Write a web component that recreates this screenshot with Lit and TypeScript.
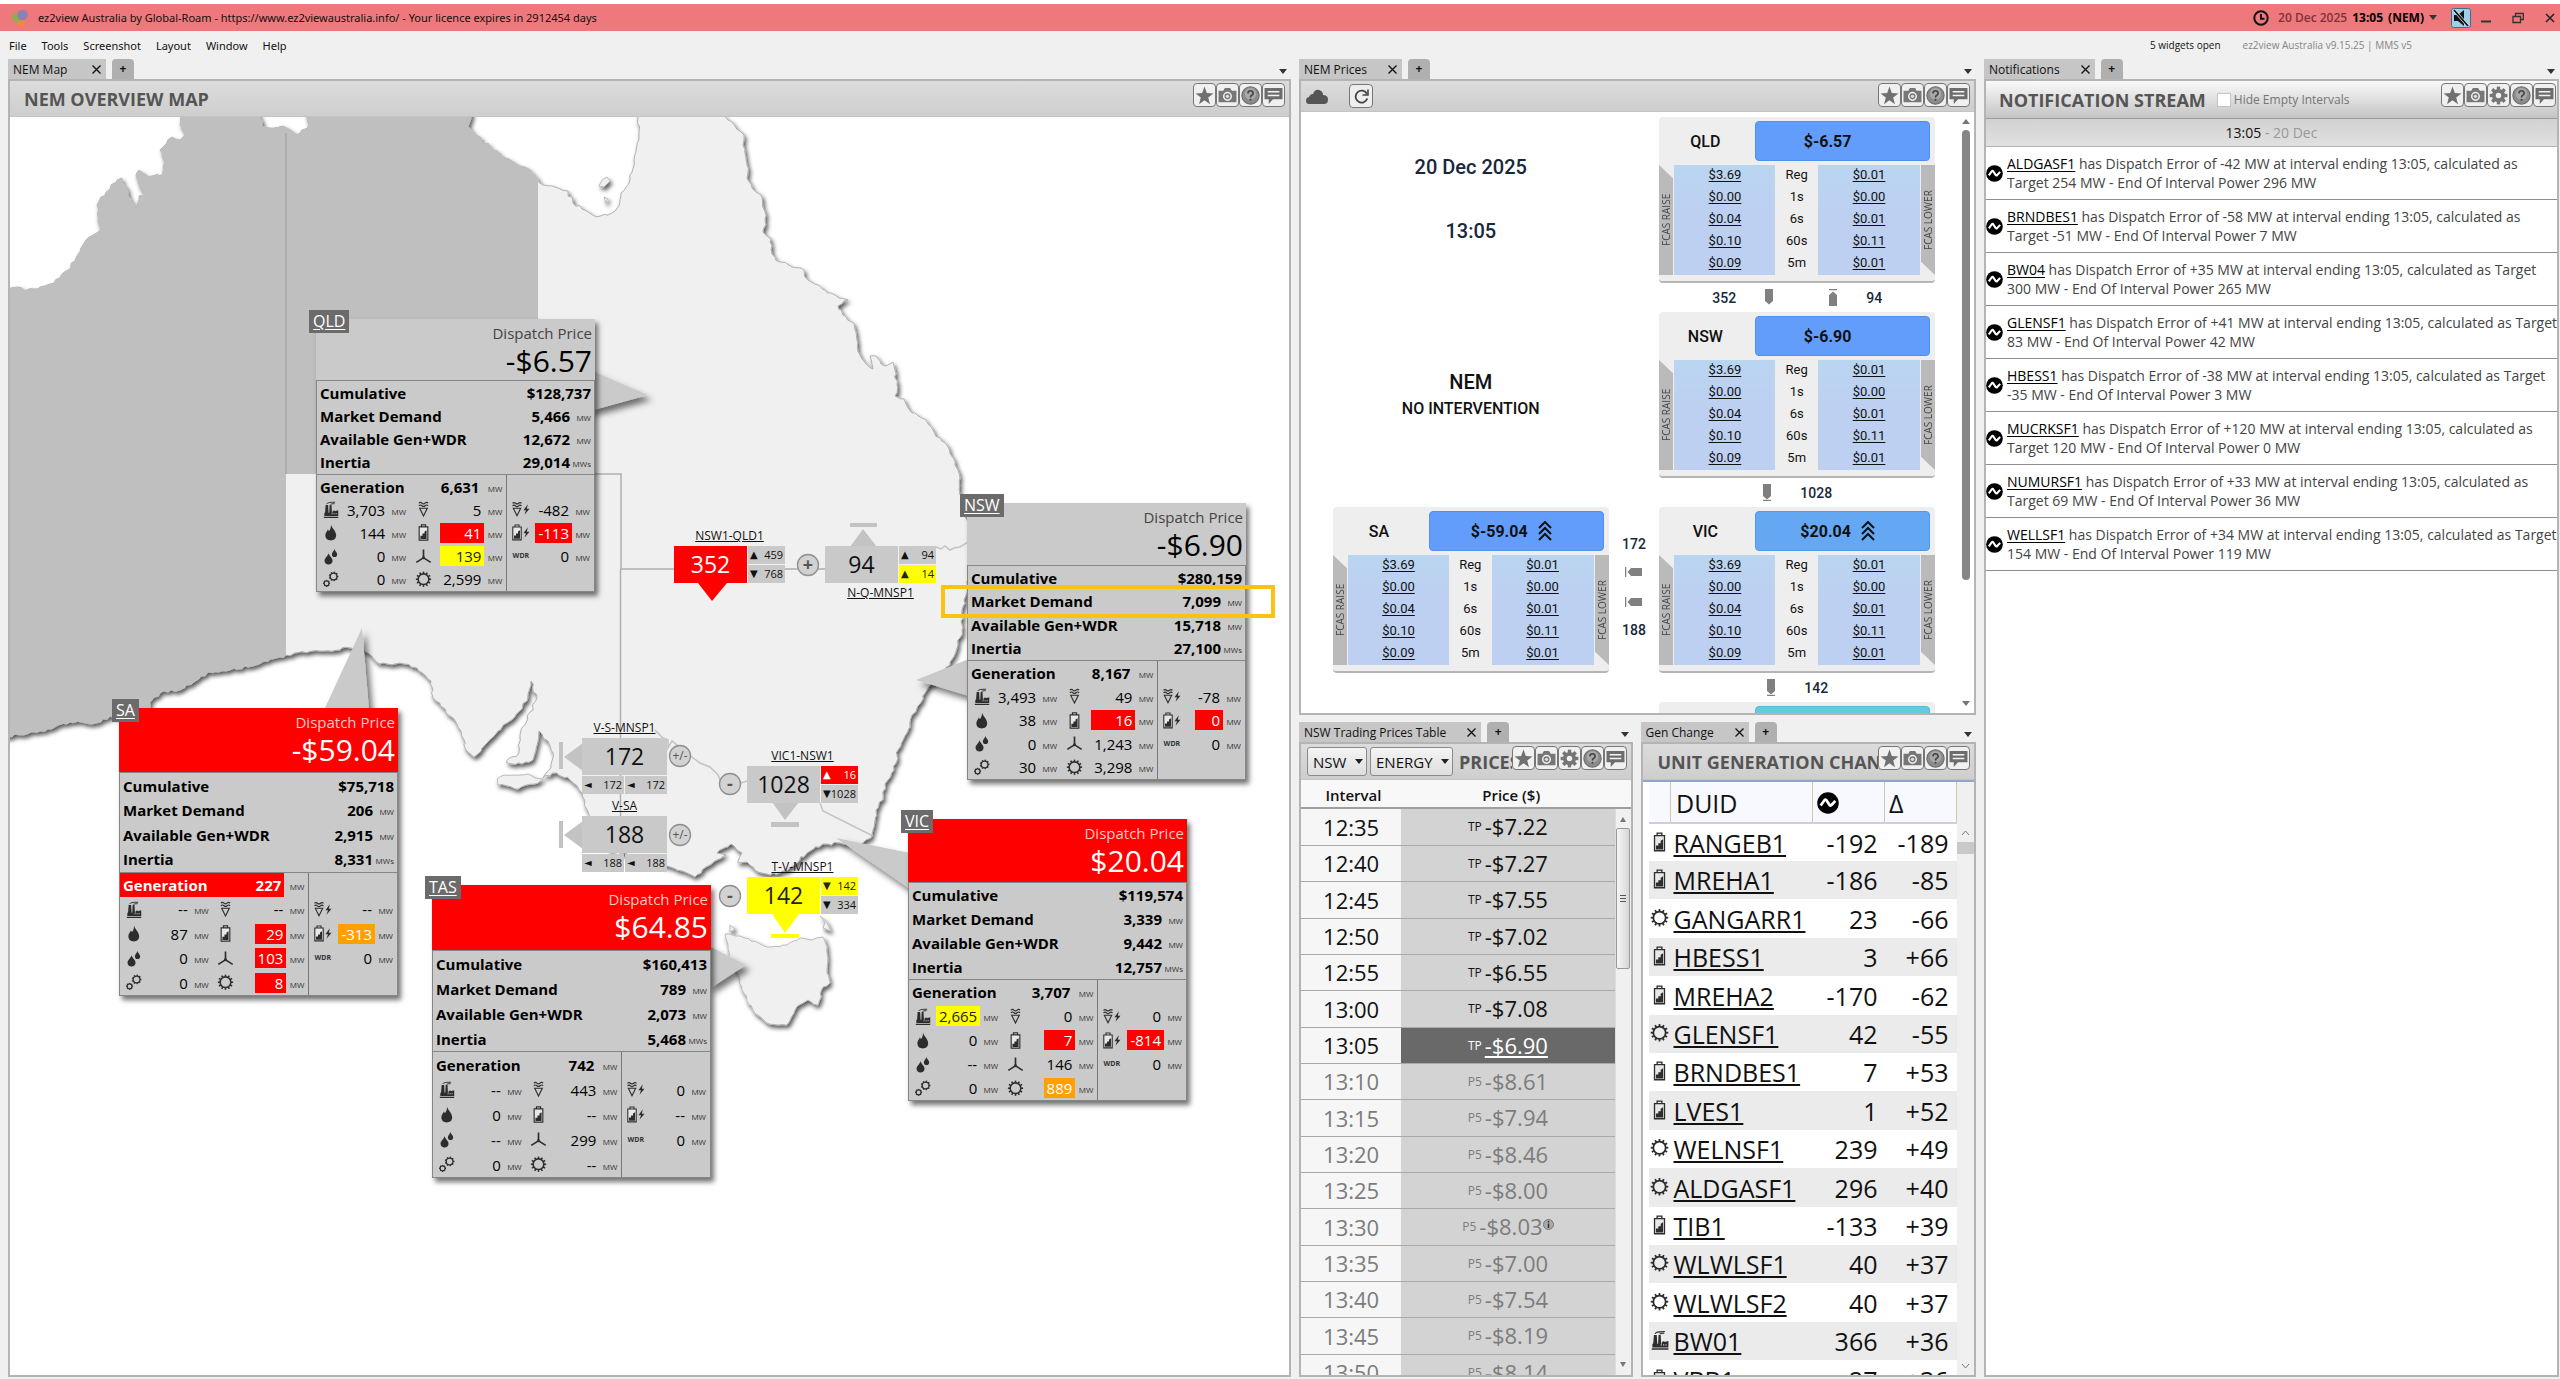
import { LitElement, html, svg, css, nothing } from "lit";
import { customElement, property } from "lit/decorators.js";
import { classMap } from "lit/directives/class-map.js";

type Pt = [number, number];

/* ---------- icons ---------- */

const ring = (cx: number, cy: number, r: number, w: number, teeth = 12) => svg`
  <circle cx=${cx} cy=${cy} r=${r} fill="none" stroke="#2d2d2d" stroke-width=${w}></circle>
  ${Array.from({ length: teeth }, (_, i) => {
    const a = (i * Math.PI * 2) / teeth;
    const c = Math.cos(a), s = Math.sin(a);
    return svg`<line x1=${cx + c * r} y1=${cy + s * r} x2=${cx + c * r * 1.42} y2=${cy + s * r * 1.42} stroke="#2d2d2d" stroke-width=${w}></line>`;
  })}`;

const glyphs: Record<string, unknown> = {
  coal: svg`<path fill="#2d2d2d" d="M2.600 12.500 L3.300 4 H5.700 L6.200 12.500 Z M6.800 12 L7.200 4 H9 L9.400 12 Z M2 11.500 H10 V10 L12 9 V10 L15.500 9 V14.500 H2 Z M1.500 15.200 H15.500 V16.400 H1.500 Z"></path><path d="M4.200 3 Q5 1 12.500 1.200 M8 3.300 Q9 2.500 12 2.600" fill="none" stroke="#2d2d2d" stroke-width=".9"></path><path d="M9 12.300 H15" stroke="#ccc" stroke-width="1" stroke-dasharray="1 1"></path>`,
  gas: svg`<path fill="#2d2d2d" d="M8.500 .5 C9 4 13.500 6.500 13.500 11 C13.500 14.500 11 16 8.300 16 C5.500 16 3 14.500 3 11 C3 8 5 7 5.500 5 L6.500 7 C8 5.500 8.500 3 8.500 .5 Z"></path>`,
  liquid: svg`<path fill="#2d2d2d" d="M6 5 C7 8 10 9.500 10 12.300 C10 14.600 8.200 16 6.100 16 C4 16 2.200 14.600 2.200 12.300 C2.200 9.500 5.500 8 6 5 Z M11.700 1 C12.300 3 14.500 4.200 14.500 6.200 C14.500 7.800 13.300 8.700 11.900 8.700 C10.500 8.700 9.300 7.800 9.300 6.200 C9.300 4.500 11.500 3 11.700 1 Z"></path>`,
  other: svg`${ring(4.200, 12, 2.400, 1.200, 8)}${ring(11, 5.300, 3.300, 1.300, 9)}`,
  hydro: svg`<path d="M3.500 2 Q5 .6 6.500 2 T9.500 2 T12.500 2 M3.500 4.600 Q5 3.200 6.500 4.600 T9.500 4.600 T12.500 4.600 M4.300 7 L8 14.500 L11.700 7 Z" fill="none" stroke="#2d2d2d" stroke-width="1.100"></path>`,
  battery: svg`<path d="M6 2.500 V.8 H10 V2.500 M3.800 2.800 H12.200 V15.600 H3.800 Z" fill="#e8e8e8" stroke="#2d2d2d" stroke-width="1.100"></path><path d="M5 14.600 V11.300 L7 11.300 V9.300 H9 V7.300 L11 6 V14.600 Z" fill="#2d2d2d"></path>`,
  wind: svg`<path d="M8 9 V1.500 M8.500 9.800 L15 14 M7.500 9.800 L1 14" stroke="#2d2d2d" stroke-width="1.600" fill="none"></path><circle cx="8" cy="9.500" r="1.400" fill="#2d2d2d"></circle>`,
  solar: ring(8, 8, 5.200, 1.500),
  bolt: svg`<path d="M12.800 3 L8.500 9 H11 L9.500 13.500 L14.500 7.500 H11.800 Z" fill="#2d2d2d"></path>`,
};
const glyph = (name: string) => html`<svg class="glyph" viewBox="0 0 16 16.500" aria-hidden="true">${glyphs[name]}</svg>`;

const tools: Record<string, unknown> = {
  Favourite: svg`<path fill="#707070" d="M9 .5 L11.200 6.600 L17.500 7 L12.500 10.800 L14.200 17.200 L9 13.500 L3.800 17.200 L5.500 10.800 L.5 7 L6.800 6.600 Z"></path>`,
  Snapshot: svg`<path fill="#777" d="M.5 4.500 H5 L6.500 2 H11.500 L13 4.500 H17.500 V15.500 H.5 Z"></path><circle cx="9" cy="9.800" r="3.600" fill="#777" stroke="#f2f2f2" stroke-width="1.400"></circle><circle cx="9" cy="9.800" r="1.600" fill="#ddd"></circle>`,
  Settings: svg`<circle cx="9" cy="9" r="4.400" fill="none" stroke="#757575" stroke-width="3.600"></circle>${Array.from({ length: 8 }, (_, i) => svg`<rect x="7.400" y=".6" width="3.200" height="3" fill="#757575" transform="rotate(${i * 45} 9 9)"></rect>`)}`,
  Help: svg`<circle cx="9" cy="9" r="8.200" fill="#8c8c8c" stroke="#6a6a6a" stroke-width="1"></circle><circle cx="9" cy="7.500" r="5.500" fill="#a8a8a8"></circle><path d="M6.500 7 Q6.700 4.500 9 4.500 T11.500 7 Q11.500 8.200 9.800 9 Q9 9.600 9 11" fill="none" stroke="#444" stroke-width="1.600"></path><circle cx="9" cy="13" r="1" fill="#444"></circle>`,
  Comment: svg`<path fill="#6d6d6d" d="M.5 2 H17.500 V12.500 H8.500 L4.500 17 V12.500 H.5 Z"></path><path d="M3.500 5.500 H14.500 M3.500 9 H14.500" stroke="#f4f4f4" stroke-width="1.400"></path>`,
};

const sineBadge = html`<svg class="sine" viewBox="0 0 18 18" aria-hidden="true"><circle cx="9" cy="9" r="8.800" fill="#000"></circle><path d="M3 11 L6.200 6.600 Q7 5.800 7.700 6.800 L10.300 10.700 Q11.100 11.600 11.900 10.600 L15 7.300" fill="none" stroke="#fff" stroke-width="2.200"></path></svg>`;

/* ---------- data ---------- */

type Cell = [string, string?];
interface Region {
  name: string; x: number; y: number; h: number; hot: boolean; price: string;
  rows: [string, string, string][];
  gen: Cell; a: Cell[]; b: Cell[]; c: Cell[];
}
const region = (name: string, x: number, y: number, h: number, hot: boolean, price: string, top: string[], gen: Cell, a: Cell[], b: Cell[], c: Cell[]): Region => ({
  name, x, y, h, hot, price, gen, a, b, c,
  rows: [["Cumulative", top[0], ""], ["Market Demand", top[1], "MW"], ["Available Gen+WDR", top[2], "MW"], ["Inertia", top[3], "MWs"]],
});
const regions: Region[] = [
  region("QLD", 316, 319, 273, false, "-$6.57", ["$128,737", "5,466", "12,672", "29,014"], ["6,631"],
    [["3,703"], ["144"], ["0"], ["0"]], [["5"], ["41", "red"], ["139", "yellow"], ["2,599"]], [["-482"], ["-113", "red"], ["0"]]),
  region("NSW", 967, 503, 277, false, "-$6.90", ["$280,159", "7,099", "15,718", "27,100"], ["8,167"],
    [["3,493"], ["38"], ["0"], ["30"]], [["49"], ["16", "red"], ["1,243"], ["3,298"]], [["-78"], ["0", "red"], ["0"]]),
  region("SA", 119, 708, 288, true, "-$59.04", ["$75,718", "206", "2,915", "8,331"], ["227", "red"],
    [["--"], ["87"], ["0"], ["0"]], [["--"], ["29", "red"], ["103", "red"], ["8", "red"]], [["--"], ["-313", "orange"], ["0"]]),
  region("TAS", 432, 885, 293, true, "$64.85", ["$160,413", "789", "2,073", "5,468"], ["742"],
    [["--"], ["0"], ["--"], ["0"]], [["443"], ["--"], ["299"], ["--"]], [["0"], ["--"], ["0"]]),
  region("VIC", 908, 819, 282, true, "$20.04", ["$119,574", "3,339", "9,442", "12,757"], ["3,707"],
    [["2,665", "yellow"], ["0"], ["--"], ["0"]], [["0"], ["7", "red"], ["146"], ["889", "orange"]], [["0"], ["-814", "red"], ["0"]]),
];

interface Link { id: string; x: number; y: number; value: string; tone: string; side: boolean; below?: boolean; limits: [string, string, string?][] }
const links: Link[] = [
  { id: "NSW1-QLD1", x: 674, y: 546, value: "352", tone: "red", side: true, limits: [["▲", "459"], ["▼", "768"]] },
  { id: "N-Q-MNSP1", x: 825, y: 546, value: "94", tone: "", side: true, below: true, limits: [["▲", "94"], ["▲", "14", "yellow"]] },
  { id: "VIC1-NSW1", x: 747, y: 766, value: "1028", tone: "", side: true, limits: [["▲", "16", "red"], ["▼", "1028"]] },
  { id: "T-V-MNSP1", x: 747, y: 877, value: "142", tone: "yellow", side: true, limits: [["▼", "142", "yellow"], ["▼", "334"]] },
  { id: "V-S-MNSP1", x: 582, y: 738, value: "172", tone: "", side: false, limits: [["◄", "172"], ["◄", "172"]] },
  { id: "V-SA", x: 582, y: 816, value: "188", tone: "", side: false, limits: [["◄", "188"], ["◄", "188"]] },
];

const intervals: [string, string, string][] = [
  ["12:35", "TP", "-$7.22"], ["12:40", "TP", "-$7.27"], ["12:45", "TP", "-$7.55"], ["12:50", "TP", "-$7.02"],
  ["12:55", "TP", "-$6.55"], ["13:00", "TP", "-$7.08"], ["13:05", "TP", "-$6.90"], ["13:10", "P5", "-$8.61"],
  ["13:15", "P5", "-$7.94"], ["13:20", "P5", "-$8.46"], ["13:25", "P5", "-$8.00"], ["13:30", "P5", "-$8.03"],
  ["13:35", "P5", "-$7.00"], ["13:40", "P5", "-$7.54"], ["13:45", "P5", "-$8.19"], ["13:50", "P5", "-$8.14"],
];

const units: [string, string, string, string][] = [
  ["battery", "RANGEB1", "-192", "-189"], ["battery", "MREHA1", "-186", "-85"], ["solar", "GANGARR1", "23", "-66"],
  ["battery", "HBESS1", "3", "+66"], ["battery", "MREHA2", "-170", "-62"], ["solar", "GLENSF1", "42", "-55"],
  ["battery", "BRNDBES1", "7", "+53"], ["battery", "LVES1", "1", "+52"], ["solar", "WELNSF1", "239", "+49"],
  ["solar", "ALDGASF1", "296", "+40"], ["battery", "TIB1", "-133", "+39"], ["solar", "WLWLSF1", "40", "+37"],
  ["solar", "WLWLSF2", "40", "+37"], ["coal", "BW01", "366", "+36"], ["battery", "VBB1", "27", "+36"],
];

const notices: [string, string, string, string][] = [
  ["ALDGASF1", "-42", "254", "296"], ["BRNDBES1", "-58", "-51", "7"], ["BW04", "+35", "300", "265"], ["GLENSF1", "+41", "83", "42"],
  ["HBESS1", "-38", "-35", "3"], ["MUCRKSF1", "+120", "120", "0"], ["NUMURSF1", "+33", "69", "36"], ["WELLSF1", "+34", "154", "119"],
];

/* ---------- map geometry ---------- */

const mainland: Pt[] = [
  [0, 288], [18, 287], [25, 291], [45, 286], [60, 278], [75, 261], [83, 245], [86, 240], [100, 231], [98, 222], [97, 205], [101, 197],
  [110, 189], [117, 180], [122, 178], [128, 193], [136, 209], [139, 196], [146, 195], [136, 176], [139, 170], [146, 175], [160, 176],
  [165, 162], [160, 150], [172, 137], [180, 140], [186, 135], [180, 125], [181, 110], [258, 110], [264, 127], [270, 128], [285, 127],
  [296, 135], [302, 130], [309, 125], [305, 110], [472, 110], [468, 127], [475, 135], [490, 147], [505, 158], [515, 163], [530, 170],
  [538, 179], [543, 185], [568, 191], [573, 203], [582, 209], [597, 217], [612, 213], [618, 207], [621, 193], [630, 180], [634, 160],
  [639, 135], [637, 110], [718, 110], [728, 120], [740, 131], [744, 135], [743, 145], [747, 165], [747, 178], [756, 192], [761, 195],
  [766, 215], [763, 232], [771, 239], [772, 254], [780, 262], [792, 267], [801, 268], [808, 280], [825, 290], [835, 295], [848, 300],
  [838, 306], [843, 315], [852, 322], [857, 340], [860, 355], [866, 364], [873, 369], [870, 356], [876, 356], [885, 366], [893, 362],
  [895, 370], [897, 385], [895, 396], [904, 399], [912, 413], [925, 419], [934, 432], [948, 447], [955, 462], [960, 478], [960, 495],
  [970, 530], [970, 575], [964, 600], [962, 630], [957, 648], [950, 665], [940, 678], [928, 688], [920, 704], [912, 715], [907, 733], [898, 750],
  [894, 770], [885, 784], [883, 800], [876, 810], [873, 830], [871, 838], [860, 844], [840, 843], [823, 844], [807, 853], [793, 866],
  [780, 873], [770, 875], [758, 872], [747, 862], [738, 863], [742, 853], [737, 850], [731, 844], [717, 853], [726, 855], [717, 860],
  [706, 867], [695, 877], [687, 873], [667, 866], [640, 856], [612, 853], [592, 830], [588, 812], [582, 793], [570, 780], [557, 773],
  [543, 778], [551, 768], [553, 753], [548, 741], [539, 731], [533, 760], [522, 764], [506, 762], [519, 753], [521, 731], [530, 712],
  [537, 698], [531, 681], [527, 701], [514, 718], [498, 731], [485, 745], [478, 754], [474, 757], [466, 750], [461, 731],
  [445, 709], [433, 698], [431, 681], [417, 668], [400, 663], [380, 664], [368, 653], [351, 648], [319, 651], [286, 655], [253, 666],
  [230, 670], [208, 672], [194, 682], [180, 690], [160, 693], [152, 700], [149, 710], [130, 720], [110, 716], [96, 723], [70, 722], [40, 731], [0, 738],
];
const tasmania: Pt[] = [
  [725, 934], [740, 936], [767, 947], [787, 945], [800, 938], [812, 940], [823, 937], [827, 947], [827, 973], [830, 983], [823, 987],
  [818, 1005], [808, 1000], [803, 1003], [795, 1010], [787, 1025], [767, 1023], [753, 1010], [742, 990], [738, 975], [730, 960],
];
const kangaroo: Pt[] = [[497, 779], [505, 775], [520, 775], [528, 774], [535, 778], [543, 779], [534, 784], [526, 785], [518, 789], [508, 786], [498, 785]];

/** Breaks long straight runs into short uneven steps, so a coast reads as natural. */
function coast(points: Pt[], amount = 1.5): string {
  let seed = 7;
  const rnd = () => { seed = (seed * 16807) % 2147483647; return seed / 2147483647 - 0.5; };
  const out: string[] = [];
  points.forEach((p, i) => {
    const q = points[(i + 1) % points.length];
    const len = Math.hypot(q[0] - p[0], q[1] - p[1]);
    const n = Math.max(1, Math.round(len / 4));
    for (let k = 0; k < n; k++) {
      const t = k / n;
      const j = k === 0 ? 0 : amount * 2;
      out.push(`${(p[0] + (q[0] - p[0]) * t + rnd() * j).toFixed(1)} ${(p[1] + (q[1] - p[1]) * t + rnd() * j).toFixed(1)}`);
    }
  });
  return `M${out.join("L")}Z`;
}
const mainlandPath = coast(mainland);

const ORIGIN: Pt = [10, 117];
const at = (x: number, y: number) => `left:${x - ORIGIN[0]}px;top:${y - ORIGIN[1]}px`;

const base = css`
  * { box-sizing: border-box; }
  a { color: inherit; text-decoration: underline; text-underline-offset: 2px; }
  button { font: inherit; color: inherit; padding: 0; border: 0; background: none; }
  h2, h3, p, ul, dl, dd { margin: 0; padding: 0; }
  .glyph { width: 17px; height: 17px; display: block; }
  .red { background: #f00; color: #fff; }
  .yellow { background: #ff0; color: #222; }
  .orange { background: #ffa000; color: #fff; }
`;

/* ---------- region call-out on the map ---------- */

@customElement("region-card")
class RegionCard extends LitElement {
  @property({ attribute: false }) data!: Region;

  static styles = [base, css`
    :host { display: block; width: 279px; color: #000; font-size: 15px; line-height: 20px; }
    .card { position: relative; height: 100%; display: grid; grid-template-rows: 61fr 94fr 118fr; background: #cacaca; box-shadow: 3px 4px 5px rgba(0, 0, 0, .55); }
    .name { position: absolute; left: -7px; top: -9px; height: 23px; padding: 0 4px; background: #6b6b6b; color: #fff; font-size: 16px; line-height: 22px; }
    .head { padding: 4px 3px 0 0; text-align: right; color: #444; line-height: 20px; }
    .price { font-size: 30px; line-height: 36px; color: #000; }
    .hot .head { background: #f00; color: #ffc9c9; }
    .hot .price { color: #fff; }
    .totals { display: grid; grid-template-rows: repeat(4, 1fr); border: 1px solid #868686; border-bottom: 0; font-weight: 700; }
    .total { display: flex; align-items: center; padding: 0 3px; }
    .total dt { flex: 1; }
    .unit { width: 21px; font-size: 8px; font-weight: 400; color: #333; text-align: right; line-height: 10px; padding-top: 4px; }
    .fuel { display: grid; grid-template-columns: 190fr 88fr; border: 1px solid #868686; min-height: 0; }
    .made { display: grid; grid-template-rows: 1fr 4fr; border-right: 1px solid #777; min-height: 0; }
    .stored { display: grid; grid-template-rows: 1fr 4fr; padding-right: 4px; }
    .gen { display: flex; align-items: center; font-weight: 700; padding-right: 4px; }
    .gen-fill { display: flex; flex: 1; align-self: stretch; align-items: center; justify-content: space-between; padding: 0 3px; }
    .gen .unit { width: 20px; }
    .pair { display: grid; grid-template-columns: 91fr 98fr; padding-right: 4px; }
    .group { display: grid; grid-template-columns: 27px 1fr auto 18px; grid-template-rows: repeat(4, 1fr); align-items: center; font-size: 15px; }
    .group + .group { grid-template-columns: 34px 1fr auto 18px; }
    .ic { display: flex; justify-content: center; }
    .value { grid-column: 3; text-align: right; padding: 0 3px; }
    .group .unit { width: 18px; }
    .wdr { font-size: 7px; font-weight: 700; color: #333; line-height: 10px; }
    .small { width: 12px; }
    .small + .small { width: 10px; margin-left: -2px; }
  `];

  private group(cells: Cell[], icons: string[]) {
    return html`<div class="group">${cells.map((c, i) => html`
      <span class="ic">${icons[i] === "WDR" ? html`<span class="wdr">WDR</span>` : icons[i].split("+").map((n, _, all) => html`<svg class="glyph ${all.length > 1 ? "small" : ""}" viewBox=${n === "bolt" ? "6 0 10 16.5" : all.length > 1 ? "2 0 12 16.5" : "0 0 16 16.5"} aria-hidden="true">${glyphs[n]}</svg>`)}</span>
      <span class="value ${c[1] ?? ""}">${c[0]}</span><span class="unit">MW</span>`)}</div>`;
  }

  render() {
    const d = this.data;
    return html`<section class=${classMap({ card: true, hot: d.hot })}>
      <a class="name" href="#${d.name}">${d.name}</a>
      <div class="head"><div>Dispatch Price</div><div class="price">${d.price}</div></div>
      <dl class="totals">${d.rows.map(r => html`<div class="total"><dt>${r[0]}</dt><dd>${r[1]}</dd>${r[2] ? html`<dd class="unit">${r[2]}</dd>` : nothing}</div>`)}</dl>
      <div class="fuel">
        <div class="made">
          <div class="gen"><div class="gen-fill ${d.gen[1] ?? ""}"><span>Generation</span><span>${d.gen[0]}</span></div><span class="unit">MW</span></div>
          <div class="pair">${this.group(d.a, ["coal", "gas", "liquid", "other"])}${this.group(d.b, ["hydro", "battery", "wind", "solar"])}</div>
        </div>
        <div class="stored"><span></span>${this.group(d.c, ["hydro+bolt", "battery+bolt", "WDR"])}</div>
      </div>
    </section>`;
  }
}

/* ---------- region tile in the price panel ---------- */

@customElement("price-tile")
class PriceTile extends LitElement {
  @property() name = "";
  @property() price = "";
  @property() tone = "";
  @property({ type: Boolean }) rising = false;

  static styles = [base, css`
    :host { display: block; font-family: Roboto, "Liberation Sans", sans-serif; font-weight: 400; color: #111; }
    .tile { background: #eee; border-radius: 4px; border-bottom: 2px solid #b5b5b5; height: 166px; padding-top: 4px; }
    .top { display: grid; grid-template-columns: 96fr 175fr 5fr; height: 40px; align-items: stretch; }
    .name { display: flex; align-items: center; justify-content: center; font-size: 16px; font-weight: 500; margin: 0; padding-right: 4px; }
    .price { display: flex; align-items: center; justify-content: center; gap: 10px; font-size: 16px; font-weight: 700; background: #639dfb; border: 1px solid #4f8ff0; border-radius: 4px; padding-right: 30px; }
    .rising { padding-right: 10px; }
    .price.mid { background: #64a8f4; border-color: #4f9aec; }
    .price.teal { background: #66cbe0; border-color: #4fbdd4; }
    .price svg { width: 14px; height: 20px; }
    .body { display: grid; grid-template-columns: 14px 102fr 41fr 103fr 14px; column-gap: 1px; margin-top: 4px; height: 110px; }
    .bar { writing-mode: vertical-rl; transform: rotate(180deg); background: #bababa; color: #444; font: 10px/14px "Open Sans", sans-serif; display: flex; align-items: center; justify-content: center; }
    .raise { clip-path: polygon(0 0, 100% 0, 100% 100%, 0 88%); }
    .lower { clip-path: polygon(0 0, 100% 12%, 100% 100%, 0 100%); }
    .col { display: grid; grid-template-rows: repeat(5, 22px); font-size: 13px; line-height: 20px; text-align: center; }
    .tint { background: linear-gradient(#b9d5f0, #bdd0f2 40%); }
  `];

  render() {
    return html`<section class="tile">
      <div class="top"><h3 class="name">${this.name}</h3><div class="price ${this.tone} ${this.rising ? "rising" : ""}">${this.price}
        ${this.rising ? html`<svg viewBox="0 0 14 20" aria-hidden="true"><path d="M1 7 L7 1 L13 7 M1 13 L7 7 L13 13 M1 19 L7 13 L13 19" fill="none" stroke="#111" stroke-width="2"></path></svg>` : nothing}</div></div>
      ${this.price ? html`<div class="body">
        <div class="bar raise">FCAS RAISE</div>
        <div class="col tint">${["$3.69", "$0.00", "$0.04", "$0.10", "$0.09"].map(v => html`<a href="#raise">${v}</a>`)}</div>
        <div class="col">${["Reg", "1s", "6s", "60s", "5m"].map(v => html`<span>${v}</span>`)}</div>
        <div class="col tint">${["$0.01", "$0.00", "$0.01", "$0.11", "$0.01"].map(v => html`<a href="#lower">${v}</a>`)}</div>
        <div class="bar lower">FCAS LOWER</div>
      </div>` : nothing}
    </section>`;
  }
}

/* ---------- application ---------- */

@customElement("app-root")
class AppRoot extends LitElement {
  static styles = [base, css`
    :host { display: flex; flex-direction: column; height: 100vh; overflow: hidden; background: #f0f0f0; color: #111; font-family: "Open Sans", "Noto Sans", sans-serif; font-size: 12px; }
    .titlebar { display: flex; align-items: center; height: 31px; border-top: 4px solid #fff; background: #ef787c; padding: 0 0 0 11px; flex: none; }
    .logo { width: 18px; height: 18px; margin-right: 9px; }
    .grow { flex: 1; }
    .caption { flex: 1; font-family: "Noto Sans", "Open Sans", sans-serif; font-size: 11px; }
    .when { display: flex; align-items: center; gap: 5px; font-weight: 700; color: #000; }
    .when .date { color: #7c3338; font-weight: 600; }
    .when svg { width: 16px; height: 16px; margin-right: 4px; }
    .caret { width: 0; height: 0; border: 4px solid transparent; border-top: 5px solid #333; border-bottom: 0; }
    .mute { width: 20px; height: 20px; margin: 0 5px 0 14px; }
    .wins { display: flex; gap: 12px; }
    .win { width: 20px; height: 24px; display: flex; align-items: center; justify-content: center; }
    .win svg { width: 12px; height: 12px; }
    .menubar { display: flex; align-items: center; height: 28px; padding-left: 9px; flex: none; }
    .menubar nav { display: flex; gap: 15px; flex: 1; font-family: "Noto Sans", "Open Sans", sans-serif; font-size: 11px; }
    .status { display: flex; gap: 22px; font-size: 10px; padding-right: 148px; }
    .muted { color: #858585; }
    .desk { flex: 1; min-height: 0; display: grid; grid-template-columns: 1283fr 677fr 575fr; gap: 8px; padding: 0 1px 2px 8px; }
    .middle { display: grid; grid-template-rows: 656fr 655fr; gap: 7px; min-height: 0; min-width: 0; }
    .pairs { display: grid; grid-template-columns: 334fr 336fr; gap: 8px; min-height: 0; }
    .dock { display: flex; flex-direction: column; min-height: 0; min-width: 0; }
    .tabs { display: flex; height: 20px; flex: none; align-items: stretch; }
    .tab { display: flex; align-items: center; justify-content: space-between; gap: 21px; min-width: 98px; padding: 0 5px; background: #c6c6c6; white-space: nowrap; }
    .tab svg { width: 9px; height: 9px; display: block; }
    .add { width: 22px; margin-left: 6px; background: #b0b0b0; border-radius: 4px 4px 0 0; display: flex; align-items: center; justify-content: center; font-weight: 700; line-height: 16px; }
    .tabs .caret { margin: 10px 4px 0 auto; }
    .panel { flex: 1; min-height: 0; display: flex; flex-direction: column; border: 2px solid #b4b4b4; background: #fff; overflow: hidden; }
    .head { position: relative; display: flex; align-items: center; height: 36px; flex: none; background: linear-gradient(#dcdcdc, #cecece); border-bottom: 1px solid #c4c4c4; }
    .map-head { padding-left: 14px; }
    .map-head h2, .unit-head h2 { flex: 1; }
    .unit-head { padding-left: 15px; }
    .head h2 { font-size: 18px; font-weight: 700; color: #555; white-space: nowrap; overflow: hidden; min-width: 0; line-height: 26px; }
    .tools { display: flex; align-self: flex-start; padding: 2px 4px 0 0; margin-left: auto; flex: none; }
    .tool { width: 23px; height: 24px; border: 1px solid #777; border-radius: 4px; background: #f0f0f0; display: flex; align-items: center; justify-content: center; }
    .tool svg { width: 19px; height: 19px; flex: none; }

    .canvas { position: relative; flex: 1; overflow: hidden; background: #fff; min-height: 0; }
    .land { position: absolute; left: 0; top: 0; width: 1281px; height: 1260px; }
    .spot { position: absolute; }
    .mark { position: absolute; width: 334px; height: 33px; border: 4px solid #fcc212; }
    .link { position: absolute; color: #111; }
    .link .id { position: absolute; left: 0; right: 0; top: -18px; text-align: center; line-height: 16px; white-space: nowrap; text-underline-offset: 1px; }
    .link .id.below { top: 39px; }
    .flow { display: grid; gap: 1px; }
    .across { grid-template-columns: 73px 37px; }
    .down { grid-template-rows: 37px 18px; width: 85px; }
    .amount { display: flex; align-items: center; justify-content: center; background: #c9c9c9; font-size: 23px; line-height: 37px; }
    .limits { display: grid; gap: 1px; line-height: 18px; }
    .down .limits { grid-template-columns: 1fr 1fr; }
    .limit { display: flex; justify-content: space-between; padding: 0 2px; background: #c9c9c9; line-height: 18px; font-size: 11px; }
    .limit i { font: 10px/18px "DejaVu Sans", sans-serif; }
    .amount.red, .limit.red { background: #f00; color: #fff; }
    .amount.yellow, .limit.yellow { background: #ff0; }

    .cloud { width: 24px; height: 18px; margin: 0 20px 0 4px; }
    .slim { height: 31px; }
    .refresh { width: 24px; height: 24px; border: 1px solid #777; border-radius: 4px; background: #eee; display: flex; align-items: center; justify-content: center; }
    .refresh svg { width: 17px; height: 17px; }
    .scroller { flex: 1; min-height: 0; display: flex; overflow: hidden; }
    .prices { flex: 1; min-width: 0; align-self: flex-start; display: grid; grid-template-columns: 276fr 51fr 276fr; grid-template-rows: repeat(3, 166px 29px) 166px; padding: 5px 22px 0 32px; font-family: Roboto, "Liberation Sans", sans-serif; font-weight: 500; color: #182739; }
    .stamp { grid-area: 1 / 1 / 5 / 2; text-align: center; font-size: 20px; line-height: 24px; padding-top: 38px; }
    .stamp p + p { margin-top: 40px; }
    .stamp .nem { margin-top: 127px; color: #111; }
    .stamp p + .calm { margin-top: 3px; font-size: 16px; color: #111; }
    .stamp p + .nem { margin-top: 127px; }
    .q { grid-area: 1 / 3; } .n { grid-area: 3 / 3; } .v { grid-area: 5 / 3; } .s { grid-area: 5 / 1; } .t { grid-area: 7 / 3; }
    .between { grid-column: 3; display: flex; align-items: center; justify-content: center; gap: 28px; font-size: 14px; }
    .between svg { width: 10px; height: 17px; }
    .two svg + svg { margin-left: 26px; }
    .side { grid-area: 5 / 2; display: flex; flex-direction: column; align-items: center; gap: 14px; padding-top: 28px; font-size: 14px; line-height: 18px; }
    .side svg { width: 17px; height: 10px; }
    .side svg + svg { margin-top: 6px; }
    .track { width: 17px; flex: none; display: flex; flex-direction: column; align-items: center; padding: 7px 0; }
    .up { border: 4px solid transparent; border-bottom: 5px solid #777; border-top: 0; }
    .dn { border: 4px solid transparent; border-top: 5px solid #777; border-bottom: 0; margin-top: auto; }
    .thumb { width: 8px; height: 450px; margin-top: 6px; border-radius: 4px; background: #868686; }

    .pick { position: relative; display: block; margin-left: 3px; }
    .pick::after { content: ""; position: absolute; right: 4px; top: 12px; border: 4px solid transparent; border-top: 5px solid #222; border-bottom: 0; pointer-events: none; }
    .pick select { appearance: none; height: 29px; width: 60px; font: 15px "Open Sans", sans-serif; color: #111; padding: 0 0 0 5px; background: linear-gradient(#f4f4f4, #dedede); border: 1px solid #8a8a8a; border-radius: 3px; }
    .pick .wide { width: 83px; }
    .picks { display: flex; padding-left: 3px; margin-right: 6px; flex: none; }
    table { border-collapse: collapse; width: 100%; table-layout: fixed; }
    .trade { flex: 1; min-width: 0; }
    .heading { height: 29px; font-size: 15px; line-height: 20px; background: #f8f8f8; border-bottom: 2px solid #9f9f9f; display: grid; grid-template-columns: 105fr 211fr 14fr; align-items: center; text-align: center; font-weight: 600; flex: none; padding-top: 2px; }
    .trade tr { height: 36px; }
    .trade tr:nth-child(3n) { height: 37px; }
    .trade th, .trade td { padding: 0; text-align: center; font-size: 22px; font-weight: 400; line-height: 30px; border-bottom: 1px solid #a9a9a9; }
    .trade th { width: 32%; background: #f6f6f6; }
    .trade td { background: #d3d3d3; }
    .trade small { font-size: 12px; margin-right: 3px; vertical-align: 4px; }
    .later { color: #7c7c7c; }
    .trade .now td { background: #696969; color: #fff; }
    .info { width: 11px; height: 11px; vertical-align: 5px; }
    .rail { width: 16px; flex: none; background: #f0f0f0; border-left: 1px solid #ddd; display: flex; flex-direction: column; align-items: center; padding: 8px 0; }
    .rail .up, .rail .dn { border-left-width: 3px; border-right-width: 3px; }
    .grip { width: 14px; height: 141px; margin-top: 6px; border: 1px solid #999; border-radius: 2px; background: linear-gradient(90deg, #f6f6f6, #d6d6d6); display: flex; align-items: center; justify-content: center; }
    .grip::after { content: ""; width: 6px; height: 7px; background: repeating-linear-gradient(#555 0 1px, transparent 1px 3px); }
    .units { flex: 1; min-width: 0; padding-left: 6px; }
    .units th, .units td { padding: 0; font-size: 25px; line-height: 36px; font-weight: 400; }
    .units thead th { height: 41px; padding-top: 2px; text-align: left; background: #f7f9fe; border-right: 1px solid #cfc9b0; border-bottom: 2px solid #cdcde0; }
    .units tbody tr { height: 38px; }
    .units tbody tr:nth-child(5n + 3), .units tbody tr:nth-child(5n) { height: 39px; }
    .units tbody tr:nth-child(even) { background: #ebebeb; }
    .units .pic { width: 22px; }
    .units .glyph { width: 19px; height: 22px; margin: 0 0 2px 1px; }
    .units .duid { width: 142px; text-align: left; padding-left: 3px; }
    .units thead .duid { padding-left: 5px; }
    .units .out { width: 72px; text-align: right; padding-right: 7px; }
    .units .diff { text-align: right; padding-right: 8px; }
    .units thead .out, .units thead .diff { text-align: left; padding-left: 4px; }
    .units .sine { width: 22px; height: 22px; }
    .bluebox { border-top: 2px solid #93a5c6; }
    .thin { width: 17px; flex: none; background: #f0f0f0; display: flex; flex-direction: column; align-items: center; padding: 48px 0 6px; }
    .thin svg { width: 9px; height: 6px; display: block; }
    .thin svg:last-child { margin-top: auto; }
    .nub { width: 17px; height: 12px; margin-top: 6px; background: #c9c9c9; }
    .sine { width: 17px; height: 17px; display: block; flex: none; }

    .glossy { height: 38px; padding-left: 13px; background: linear-gradient(#fafafa, #c4c4c4); border-bottom: 1px solid #9a9a9a; }
    .glossy .tools { padding-right: 1px; }
    .check { display: flex; align-items: center; gap: 3px; font-size: 12px; color: #757575; margin-left: 11px; }
    .check input { appearance: none; width: 14px; height: 14px; margin: 0; background: #fff; border: 1px solid #c4c4c4; }
    .day { height: 28px; line-height: 27px; text-align: center; font-size: 14px; background: linear-gradient(#d2d2d2, #e0e0e0); border-bottom: 1px solid #b4b4b4; flex: none; }
    .day .muted { color: #999; }
    .feed { list-style: none; }
    .feed li { display: flex; align-items: center; gap: 4px; height: 53px; border-bottom: 1px solid #8e8e8e; color: #444; font-size: 14px; line-height: 19px; white-space: nowrap; }
    .feed a { color: #000; }
  `];

  private tabs(label: string) {
    return html`<div class="tabs"><div class="tab"><span>${label}</span><button aria-label="Close ${label}"><svg viewBox="0 0 9 9"><path d="M.5 .5 L8.500 8.500 M8.500 .5 L.5 8.500" stroke="#111" stroke-width="1.300"></path></svg></button></div><button class="add" aria-label="Add tab">+</button><span class="caret"></span></div>`;
  }
  private tools(names: string[]) {
    return html`<div class="tools">${names.map(n => html`<button class="tool" aria-label=${n}><svg viewBox="0 0 18 18">${tools[n]}</svg></button>`)}</div>`;
  }

  private land() {
    const badge = (x: number, y: number, t: string) => svg`<circle cx=${x} cy=${y} r="10.500" fill="#d2d2d2" stroke="#8f8f8f" stroke-width="1.300"></circle><text x=${x} y=${y + (t.length > 1 ? 4 : 6)} text-anchor="middle" font-size=${t.length > 1 ? 12 : 18} font-weight=${t.length > 1 ? 400 : 700} fill="#555">${t}</text>`;
    return html`<svg class="land" viewBox="10 117 1281 1260" aria-hidden="true">
      <defs>
        <filter id="drop" x="-5%" y="-5%" width="112%" height="112%"><feDropShadow dx="2" dy="3" stdDeviation="2" flood-color="#000" flood-opacity=".65"></feDropShadow></filter>
        <filter id="tip" x="-30%" y="-30%" width="180%" height="180%"><feDropShadow dx="4" dy="5" stdDeviation="3" flood-color="#000" flood-opacity=".55"></feDropShadow></filter>
        <clipPath id="west"><path d="M0 100 H538 V474 H286 V760 H0 Z"></path></clipPath>
      </defs>
      <g filter="url(#drop)">
        <path d=${mainlandPath} fill="#f0f0f0" stroke="#b0b0b0" stroke-width="1"></path>
        <path d=${coast(tasmania, 1)} fill="#f0f0f0" stroke="#bbb"></path>
        <path d=${coast(kangaroo, 1)} fill="#f0f0f0" stroke="#bbb"></path>
        <path d="M820 916 l5 6 l-2 6 l8 3 l-5 -10 z M730 925 l5 4 l-5 3 z M602 180 l5 -3 l3 4 l-6 6 l-5 -1 z M604 197 l4 2 l-2 4 z" fill="#f0f0f0" stroke="#bbb"></path>
      </g>
      <path d=${mainlandPath} fill="#bfbfbf" clip-path="url(#west)"></path>
      <g fill="none" stroke="#a6a6a6" stroke-width="1.500">
        <path d="M286 133 V474"></path>
        <path d="M538 474 H621 V569 H674 M620.500 569 V855" stroke="#b0b0b0"></path>
        <path d="M784 569 H825" stroke="#bdbdbd" stroke-width="2"></path>
        <path d="M936 547 l5 2 l4 -3 l5 4 l4 -2 l6 -1 l8 -5 M655 730 l8 8 l5 2 l0 8 l4 -7 l20 16 l8 6 l10 4 l8 8 l3 7 M741 783 l6 -2 M820 803 l3 8 l50 25" stroke="#c3c3c3"></path>
      </g>
      <g fill="#cacaca" filter="url(#tip)">
        <path d="M590 370 L648 395 L590 411 Z"></path>
        <path d="M969 659 L916 680 L969 696 Z"></path>
        <path d="M362 628 L324 710 L369 710 Z"></path>
        <path d="M709 946 L746 965 L709 989 Z"></path>
        <path d="M910 853 L836 838 L910 889 Z"></path>
      </g>
      <path d="M698 583 H727 L712 601 Z" fill="#f00"></path>
      <path d="M850 547 H877 L863 529 Z M850 523 H877 V527 H850 Z M772 802 H799 L785 820 Z M771 822 H799 V827 H771 Z M583 743 V771 L564 757 Z M559 742 H563 V769 H559 Z M583 821 V849 L564 835 Z M559 821 H563 V848 H559 Z" fill="#c3c3c3"></path>
      <path d="M772 914 H799 L785 933 Z M771 934 H799 V938 H771 Z" fill="#ff0"></path>
      ${badge(808, 565, "+")}${badge(730, 784, "-")}${badge(730, 896, "-")}${badge(680, 756, "+/-")}${badge(680, 835, "+/-")}
    </svg>`;
  }

  private flow(up: boolean, stop: boolean) {
    return html`<svg viewBox="0 0 10 17" aria-hidden="true">${up
      ? svg`<path d="M1 17 V6 L5 2.500 L9 6 V17 Z M1 0 H9 V1.200 H1 Z" fill="#808080"></path>`
      : svg`<path d="M1 0 H9 V12 L5 15.500 L1 12 Z" fill="#808080"></path>${stop ? svg`<path d="M1 15.800 H9 V17 H1 Z" fill="#808080"></path>` : nothing}`}</svg>`;
  }

  render() {
    const std = ["Favourite", "Snapshot", "Help", "Comment"];
    const withGear = ["Favourite", "Snapshot", "Settings", "Help", "Comment"];
    const leftArrow = html`<svg viewBox="0 0 17 10" aria-hidden="true"><path d="M0 0 H1.300 V10 H0 Z M2.500 5 L6 1 H17 V9 H6 Z" fill="#808080"></path></svg>`;
    return html`
      <header class="titlebar">
        <svg class="logo" viewBox="0 0 18 18" aria-hidden="true"><circle cx="10" cy="13" r="4" fill="#f08a3c"></circle><circle cx="5.500" cy="8.500" r="4.500" fill="#8bb04a"></circle><circle cx="11.500" cy="6" r="5.300" fill="#8f7fb4"></circle></svg>
        <span class="caption">ez2view Australia by Global-Roam - https://www.ez2viewaustralia.info/ - Your licence expires in 2912454 days</span>
        <div class="when"><svg viewBox="0 0 16 16" aria-hidden="true"><circle cx="8" cy="8" r="6.700" fill="none" stroke="#111" stroke-width="2"></circle><path d="M8 4 V8.700 H11.500" fill="none" stroke="#111" stroke-width="2"></path></svg><span class="date">20 Dec 2025</span><span>13:05</span><span>(NEM)</span><span class="caret"></span></div>
        <button class="mute" aria-label="Mute"><svg viewBox="0 0 20 20"><rect x=".5" y=".5" width="19" height="19" rx="2" fill="#9cd0ea" stroke="#3f6f86"></rect><path d="M3 7 H7 L13 2 V18 L7 13 H3 Z" fill="#111"></path><path d="M3 2 L17 18" stroke="#d9eef8" stroke-width="3"></path><path d="M3 2 L17 18" stroke="#111" stroke-width="1.800"></path></svg></button>
        <div class="wins">
        <button class="win" aria-label="Minimise"><svg viewBox="0 0 12 12"><path d="M1 9.500 H11" stroke="#333" stroke-width="2"></path></svg></button>
        <button class="win" aria-label="Restore"><svg viewBox="0 0 12 12"><path d="M1 4.500 H8.500 V10.500 H1 Z M3.500 4 V1.500 H11.300 V7.500 H9" fill="none" stroke="#333" stroke-width="1.300"></path></svg></button>
        <button class="win" aria-label="Close"><svg viewBox="0 0 12 12"><path d="M2 2 L10 10 M10 2 L2 10" stroke="#222" stroke-width="1.500"></path></svg></button>
        </div>
      </header>
      <div class="menubar">
        <nav>${["File", "Tools", "Screenshot", "Layout", "Window", "Help"].map(m => html`<button>${m}</button>`)}</nav>
        <div class="status"><span>5 widgets open</span><span class="muted">ez2view Australia v9.15.25 | MMS v5</span></div>
      </div>
      <main class="desk">
        <section class="dock">${this.tabs("NEM Map")}
          <div class="panel">
            <div class="head map-head"><h2>NEM OVERVIEW MAP</h2>${this.tools(std)}</div>
            <div class="canvas">
              ${this.land()}
              ${links.map(l => html`<div class="link" style=${at(l.x, l.y)}>
                <a class="id ${l.below ? "below" : ""}" href="#${l.id}">${l.id}</a>
                <div class="flow ${l.side ? "across" : "down"}"><div class="amount ${l.tone}">${l.value}</div>
                <div class="limits">${l.limits.map(m => html`<div class="limit ${m[2] ?? ""}"><i>${m[0]}</i><span>${m[1]}</span></div>`)}</div></div></div>`)}
              ${regions.map(r => html`<region-card class="spot" style="${at(r.x, r.y)};height:${r.h}px" .data=${r}></region-card>`)}
              <div class="mark" style=${at(941, 585)}></div>
            </div>
          </div>
        </section>
        <div class="middle">
          <section class="dock">${this.tabs("NEM Prices")}
            <div class="panel">
              <div class="head slim"><svg class="cloud" viewBox="0 0 24 18" aria-hidden="true"><path d="M4 17 Q1 17 1 13.500 Q1 10.500 4 10 Q5 7 8 7 Q10 2 14 3 Q18 4 18 8 Q23 8 23 12.500 Q23 17 19 17 Z" fill="#555"></path></svg>
                <button class="refresh" aria-label="Refresh"><svg viewBox="0 0 17 17"><path d="M14 6 A6 6 0 1 0 14.300 10.500" fill="none" stroke="#444" stroke-width="1.800"></path><path d="M15 1.500 V7 H9.500" fill="none" stroke="#444" stroke-width="1.600"></path></svg></button>
                ${this.tools(std)}</div>
              <div class="scroller">
                <div class="prices">
                  <div class="stamp"><p>20 Dec 2025</p><p>13:05</p><p class="nem">NEM</p><p class="calm">NO INTERVENTION</p></div>
                  <price-tile class="q" name="QLD" price="$-6.57"></price-tile>
                  <div class="between two" style="grid-row:2"><span>352</span>${this.flow(false, false)}${this.flow(true, true)}<span>94</span></div>
                  <price-tile class="n" name="NSW" price="$-6.90"></price-tile>
                  <div class="between" style="grid-row:4">${this.flow(false, true)}<span>1028</span></div>
                  <price-tile class="s" name="SA" price="$-59.04" rising></price-tile>
                  <div class="side"><span>172</span>${leftArrow}${leftArrow}<span>188</span></div>
                  <price-tile class="v" name="VIC" price="$20.04" tone="mid" rising></price-tile>
                  <div class="between" style="grid-row:6">${this.flow(false, true)}<span>142</span></div>
                  <price-tile class="t" tone="teal"></price-tile>
                </div>
                <div class="track"><span class="up"></span><span class="thumb"></span><span class="dn"></span></div>
              </div>
            </div>
          </section>
          <div class="pairs">
            <section class="dock">${this.tabs("NSW Trading Prices Table")}
              <div class="panel">
                <div class="head"><div class="picks">
                  <label class="pick"><select aria-label="Region"><option>NSW</option></select></label>
                  <label class="pick"><select class="wide" aria-label="Commodity"><option>ENERGY</option></select></label></div>
                  <h2>PRICES</h2>${this.tools(withGear)}</div>
                <div class="heading"><span>Interval</span><span>Price ($)</span></div>
                <div class="scroller">
                  <div class="trade"><table aria-label="Trading prices"><tbody>${intervals.map(([t, k, p]) => html`
                    <tr class=${classMap({ now: t === "13:05", later: k === "P5" })}><th scope="row">${t}</th><td><small>${k}</small>${t === "13:05" ? html`<a href="#now">${p}</a>` : p}${t === "13:30" ? html`<svg class="info" viewBox="0 0 11 11" aria-hidden="true"><circle cx="5.500" cy="5.500" r="5" fill="#aaa" stroke="#777"></circle><path d="M5.500 2 V3.500 M5.500 4.500 V9" stroke="#333" stroke-width="1.500"></path></svg>` : nothing}</td></tr>`)}</tbody></table></div>
                  <div class="rail"><span class="up"></span><span class="grip"></span><span class="dn"></span></div>
                </div>
              </div>
            </section>
            <section class="dock">${this.tabs("Gen Change")}
              <div class="panel">
                <div class="head unit-head"><h2>UNIT GENERATION CHANGE</h2>${this.tools(std)}</div>
                <div class="scroller bluebox">
                  <div class="units"><table>
                    <thead><tr><th class="pic"></th><th class="duid">DUID</th><th class="out">${sineBadge}</th><th class="diff">Δ</th></tr></thead>
                    <tbody>${units.map(([i, n, o, d]) => html`<tr><td class="pic">${glyph(i)}</td><td class="duid"><a href="#${n}">${n}</a></td><td class="out">${o}</td><td class="diff">${d}</td></tr>`)}</tbody></table></div>
                  <div class="thin"><svg viewBox="0 0 9 6"><path d="M1 5 L4.500 1 L8 5" fill="none" stroke="#777"></path></svg><span class="nub"></span><svg viewBox="0 0 9 6"><path d="M1 1 L4.500 5 L8 1" fill="none" stroke="#777"></path></svg></div>
                </div>
              </div>
            </section>
          </div>
        </div>
        <section class="dock">${this.tabs("Notifications")}
          <div class="panel">
            <div class="head glossy"><h2>NOTIFICATION STREAM</h2>
              <label class="check"><input type="checkbox">Hide Empty Intervals</label>${this.tools(withGear)}</div>
            <div class="day">13:05 <span class="muted">- 20 Dec</span></div>
            <ul class="feed">${notices.map(([n, e, t, p]) => {
              const wrapBefore = ["ALDGASF1", "BRNDBES1", "MUCRKSF1", "NUMURSF1"].includes(n);
              return html`<li>${sineBadge}<p><a href="#${n}">${n}</a> has Dispatch Error of ${e} MW at interval ending 13:05, calculated as ${wrapBefore ? html`<br>Target ` : html`Target<br>`}${t} MW - End Of Interval Power ${p} MW</p></li>`;
            })}</ul>
          </div>
        </section>
      </main>`;
  }
}
